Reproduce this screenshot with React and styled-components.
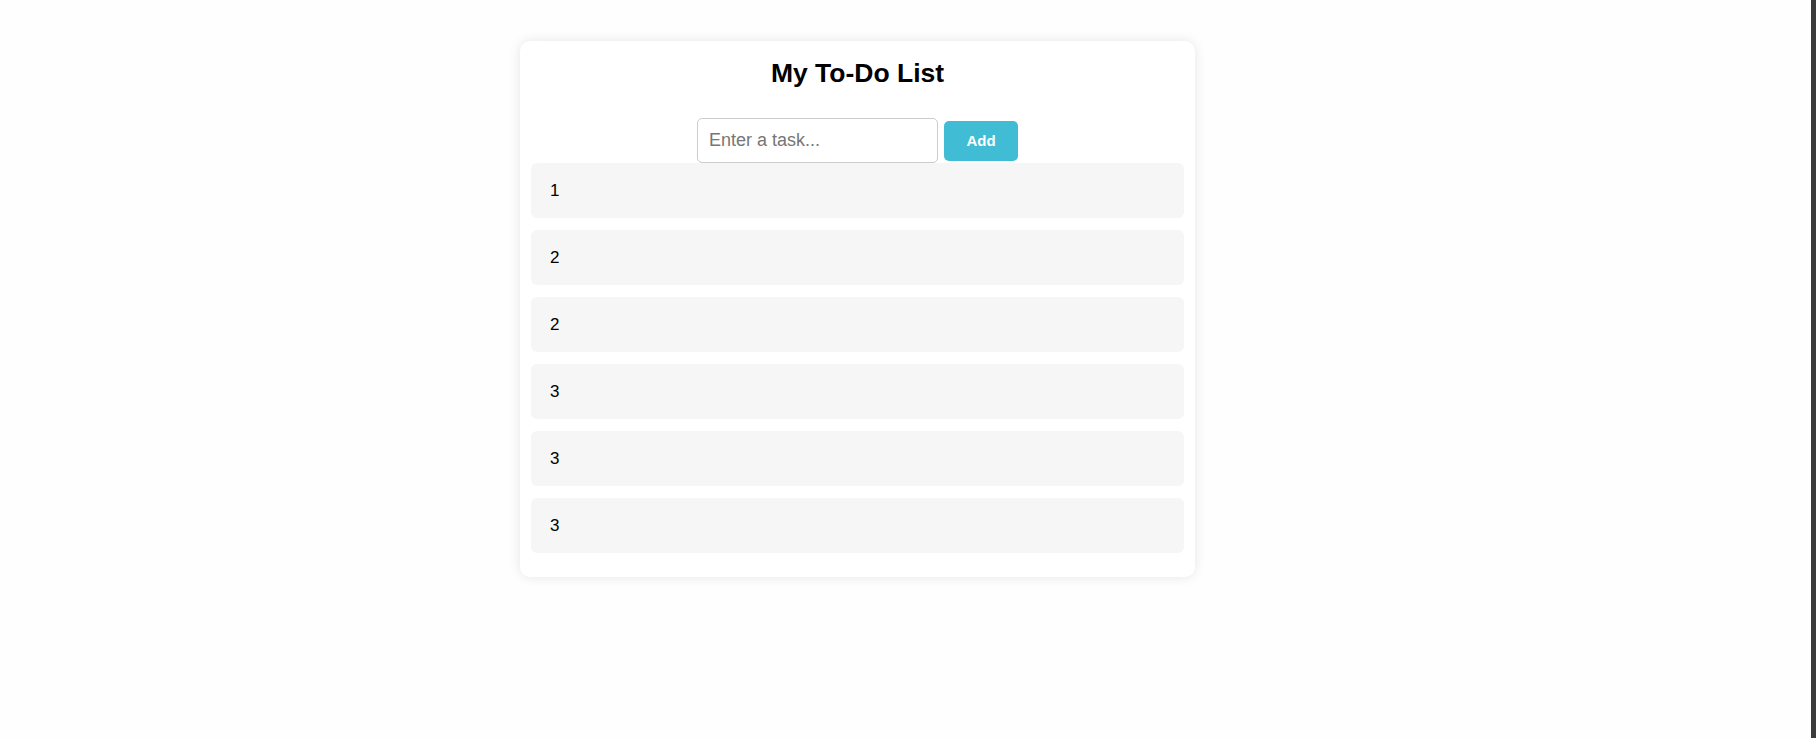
import React, { useState } from "react";
import styled, { createGlobalStyle } from "styled-components";

const GlobalStyle = createGlobalStyle`
  html, body {
    margin: 0;
    padding: 0;
    background: #fefefe;
    font-family: "Liberation Sans", Arial, sans-serif;
  }
`;

const Page = styled.div`
  display: flex;
  min-height: 100vh;
  height: 738px;
  overflow: hidden;
`;

const Main = styled.main`
  flex: 1;
  padding: 41px 0 0 520px;
`;

const Edge = styled.div`
  width: 5px;
  background: #3b3b3b;
`;

const Card = styled.div`
  width: 675px;
  box-sizing: border-box;
  padding: 10px 11px 12px;
  background: #fff;
  border-radius: 10px;
  box-shadow: 0 0 12px rgba(0, 0, 0, 0.1);
`;

const Title = styled.h1`
  margin: 7px 0 30px;
  font-size: 26.5px;
  line-height: 30px;
  font-weight: 700;
  text-align: center;
  color: #000;
`;

const Form = styled.div`
  display: flex;
  align-items: center;
  justify-content: center;
  gap: 6px;
`;

const Input = styled.input`
  width: 241px;
  height: 45px;
  box-sizing: border-box;
  padding: 0 11px;
  border: 1px solid #cccccc;
  border-radius: 5px;
  font-family: inherit;
  font-size: 18px;
  color: #222;
  outline: none;

  &::placeholder {
    color: #767676;
  }
`;

const Button = styled.button`
  width: 74px;
  height: 40px;
  border: none;
  border-radius: 5px;
  background: #40bdd4;
  color: #fff;
  font-family: inherit;
  font-size: 15px;
  font-weight: 700;
  cursor: pointer;
`;

const List = styled.ul`
  list-style: none;
  margin: 0;
  padding: 0;
`;

const Item = styled.li`
  height: 55px;
  box-sizing: border-box;
  margin-bottom: 12px;
  padding: 0 19px;
  display: flex;
  align-items: center;
  background: #f6f6f6;
  border-radius: 6px;
  font-size: 17px;
  color: #000;
`;

const App = () => {
  const [tasks, setTasks] = useState(["1", "2", "2", "3", "3", "3"]);
  const [text, setText] = useState("");

  const addTask = () => {
    if (!text.trim()) return;
    setTasks([...tasks, text.trim()]);
    setText("");
  };

  return (
    <Page>
      <GlobalStyle />
      <Main>
        <Card>
          <Title>My To-Do List</Title>
          <Form>
            <Input
              placeholder="Enter a task..."
              value={text}
              onChange={(e) => setText(e.target.value)}
            />
            <Button onClick={addTask}>Add</Button>
          </Form>
          <List>
            {tasks.map((task, index) => (
              <Item key={index}>{task}</Item>
            ))}
          </List>
        </Card>
      </Main>
      <Edge />
    </Page>
  );
};

export default App;
